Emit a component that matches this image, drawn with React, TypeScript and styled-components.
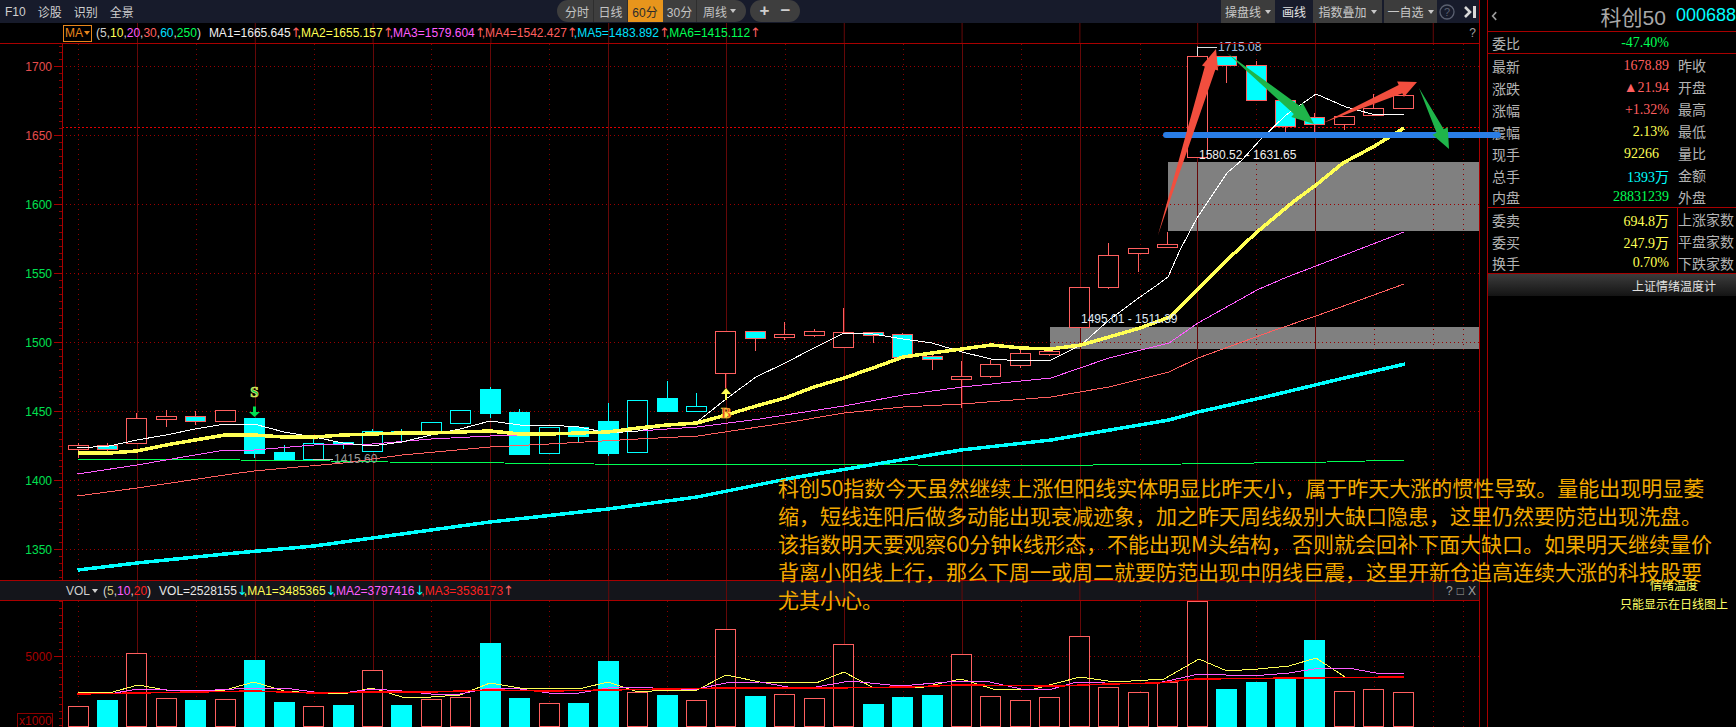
import React from 'react';
import styled, { createGlobalStyle } from 'styled-components';

const SANS = '"Liberation Sans", "Noto Sans CJK SC", sans-serif';
const SERIF = '"Liberation Serif", "Noto Sans CJK SC", serif';
const LINE = '#a80000';
const RED = '#ff5f5f';
const CYAN = '#00ffff';
const YELLOW = '#ffff54';
const MAGENTA = '#ff5cff';
const GREEN = '#00ff54';

const GlobalStyle = createGlobalStyle`
  html, body {
    margin: 0;
    background: #000;
    overflow: hidden;
  }
`;

const Page = styled.div`
  position: relative;
  width: 1736px;
  height: 727px;
  display: grid;
  grid-template-columns: 1480px 1fr;
  background: #000;
  overflow: hidden;
  font-family: ${SANS};
`;

const ChartColumn = styled.div`
  display: flex;
  flex-direction: column;
  height: 727px;
  border-right: 1px solid ${LINE};
  box-sizing: border-box;
`;

const Toolbar = styled.div`
  height: 23px;
  flex: none;
  display: flex;
  align-items: flex-start;
  background: #171b2b;
  color: #cfcfcf;
  font-size: 12px;
`;

const LeftMenu = styled.div`
  width: 557px;
  height: 23px;
  flex: none;
  display: flex;
  align-items: center;
  gap: 12px;
  padding-left: 5px;
  box-sizing: border-box;
`;

const Pill = styled.div`
  height: 22px;
  flex: none;
  display: flex;
  align-items: stretch;
  padding: 0 4px;
  margin-right: 4px;
  border-radius: 11px;
  background: #3e3e3e;
  overflow: hidden;
`;

const PillItem = styled.div<{ $w: number; $on?: boolean; $bare?: boolean }>`
  width: ${(p) => p.$w}px;
  display: flex;
  align-items: center;
  justify-content: center;
  gap: 3px;
  color: ${(p) => (p.$on ? '#2c2c2c' : '#c4c4c4')};
  background: ${(p) => (p.$on ? '#e8951c' : 'transparent')};
  border-right: ${(p) => (p.$bare ? '0' : `1px solid ${p.$on ? '#e8951c' : '#2e2e2e'}`)};
  box-sizing: border-box;
  &:last-child {
    border-right: 0;
  }
`;

const Caret = styled.span`
  display: inline-block;
  width: 0;
  height: 0;
  border-left: 3.5px solid transparent;
  border-right: 3.5px solid transparent;
  border-top: 4px solid currentColor;
`;

const ZoomSign = styled.span`
  font-size: 17px;
  font-weight: 700;
  color: #cfcfcf;
`;

const ToolRight = styled.div`
  margin-left: 417px;
  flex: none;
  display: flex;
  align-items: flex-start;
  height: 23px;
`;

const ToolButton = styled.div<{ $w: number; $ml?: number; $flat?: boolean }>`
  width: ${(p) => p.$w}px;
  margin-left: ${(p) => p.$ml ?? 0}px;
  height: 23px;
  display: flex;
  align-items: center;
  justify-content: center;
  gap: 4px;
  color: ${(p) => (p.$flat ? '#e4e4e4' : '#c8c8c8')};
  background: ${(p) => (p.$flat ? 'transparent' : '#3c3c3c')};
`;

const IconSlot = styled.div<{ $ml: number }>`
  margin-left: ${(p) => p.$ml}px;
  height: 23px;
  display: flex;
  align-items: center;
`;

const IndicatorBar = styled.div<{ $h: number; $bg: string }>`
  height: ${(p) => p.$h}px;
  display: flex;
  background: ${(p) => p.$bg};
  box-sizing: border-box;
  flex: none;
`;

const BarGutter = styled.div`
  width: 62px;
  flex: none;
`;

/* the chart's vertical rules run on through the legend strips */
const Legend = styled.div`
  flex: 1;
  display: flex;
  align-items: center;
  position: relative;
  padding-left: 1px;
  font-size: 12px;
  white-space: nowrap;
  color: #d8d8d8;
  background: linear-gradient(to right, #660808 1px, transparent 1px) 75px 0 / 117.8px 100% repeat-x;
`;

const MaBox = styled.div`
  width: 29px;
  height: 17px;
  display: flex;
  align-items: center;
  justify-content: center;
  gap: 1px;
  margin-right: 4px;
  border: 1px solid #e8861c;
  color: #e8861c;
  box-sizing: border-box;
`;

const VolTag = styled.div`
  display: flex;
  align-items: center;
  gap: 2px;
  width: 37px;
  margin-left: 3px;
  color: #cfcfcf;
`;

const Tone = styled.span<{ $c: string }>`
  color: ${(p) => p.$c};
`;

const Trend = styled.span<{ $c: string }>`
  display: inline-block;
  width: 7px;
  text-align: center;
  font-family: "DejaVu Sans", sans-serif;
  font-size: 13px;
  line-height: 12px;
  color: ${(p) => p.$c};
  overflow: visible;
`;

const Readout = styled.span`
  margin-left: 8px;
`;

const BarTools = styled.div`
  position: absolute;
  right: 3px;
  top: 0;
  bottom: 0;
  display: flex;
  align-items: center;
  gap: 4px;
  color: #a0a0a0;
  font-size: 12px;
`;

const RedRule = styled.div`
  height: 1px;
  background: ${LINE};
  flex: none;
  position: relative;
`;

const PlotSvg = styled.svg`
  display: block;
  flex: none;
  background: #000;
  overflow: visible;
`;

const AxisText = styled.text<{ $c: string }>`
  font-family: ${SANS};
  font-size: 12px;
  fill: ${(p) => p.$c};
`;

const NoteText = styled.text<{ $c: string }>`
  font-family: ${SANS};
  font-size: 12px;
  fill: ${(p) => p.$c};
`;

const SignalText = styled.text<{ $c: string; $s: string }>`
  font-family: ${SERIF};
  font-size: 15px;
  font-weight: 700;
  fill: ${(p) => p.$c};
  stroke: ${(p) => p.$s};
  stroke-width: 0.7px;
`;

const QuotePanel = styled.aside`
  margin-left: 7px;
  border-left: 1px solid ${LINE};
  display: flex;
  flex-direction: column;
  color: #b4b4b4;
  font-size: 14px;
  overflow: hidden;
`;

const TitleRow = styled.div`
  height: 31px;
  flex: none;
  display: flex;
  align-items: center;
  padding-left: 3px;
  border-bottom: 1px solid ${LINE};
  white-space: nowrap;
`;

const Name = styled.span`
  margin-left: 103px;
  font-size: 21px;
  color: #a8a8a8;
`;

const Code = styled.span`
  margin-left: 10px;
  font-size: 18px;
  color: ${CYAN};
`;

const Section = styled.div`
  display: flex;
  flex-direction: column;
  flex: none;
  border-bottom: 1px solid ${LINE};
`;

const QuoteRow = styled.div`
  height: 22px;
  display: grid;
  grid-template-columns: 28px 1fr 58px;
  column-gap: 9px;
  align-items: center;
  padding: 1px 0 0 4px;
  box-sizing: border-box;
  white-space: nowrap;
  &:last-child {
    height: 21px;
  }
`;

const Value = styled.span<{ $c: string; $inset?: number }>`
  text-align: right;
  font-family: ${SERIF};
  color: ${(p) => p.$c};
  padding-right: ${(p) => p.$inset ?? 0}px;
`;

const SideLabel = styled.span<{ $split?: boolean }>`
  align-self: stretch;
  display: flex;
  align-items: center;
  margin-top: -1px;
  ${(p) => (p.$split ? `border-left: 1px solid ${LINE}; margin-left: -1px;` : '')}
`;

const GaugeButton = styled.div`
  height: 22px;
  flex: none;
  display: flex;
  align-items: center;
  padding-left: 144px;
  font-size: 12px;
  color: #e0e0e0;
  background: linear-gradient(#3c3c3c, #141414);
`;

const GaugeNote = styled.div`
  width: 108px;
  margin: 280px 0 0 132px;
  display: flex;
  flex-direction: column;
  align-items: center;
  gap: 2px;
  font-size: 12px;
  color: #ffff66;
  white-space: nowrap;
`;

const OverlaySvg = styled.svg`
  position: absolute;
  left: 0;
  top: 0;
  pointer-events: none;
`;

const Commentary = styled.div`
  position: absolute;
  left: 778px;
  top: 473px;
  font-family: "Noto Sans CJK SC", ${SANS};
  font-size: 21px;
  line-height: 28px;
  color: #f2a900;
  white-space: nowrap;
`;

type Kind = 'r' | 'c' | 'h' | 'm';
type Candle = [number, number, number, number, Kind];

// bodyTop, bodyBottom, wickTop, wickBottom, kind
const candles: Candle[] = [
  [445, 449, 443, 458, 'r'], [445, 449, 443, 451, 'm'], [418, 443, 413, 443, 'r'], [416, 419, 410, 427, 'r'],
  [416, 421, 411, 425, 'm'], [410, 421, 410, 421, 'r'], [418, 453, 418, 458, 'c'], [452, 459, 445, 459, 'c'],
  [443, 459, 435, 459, 'h'], [442, 444, 442, 449, 'c'], [431, 451, 429, 451, 'h'], [431, 433, 429, 441, 'c'],
  [422, 432, 422, 432, 'h'], [410, 423, 410, 424, 'h'], [389, 413, 387, 418, 'c'], [412, 454, 409, 454, 'c'],
  [427, 453, 427, 453, 'h'], [427, 436, 426, 442, 'c'], [421, 453, 403, 456, 'c'], [400, 452, 400, 452, 'h'],
  [398, 411, 381, 411, 'c'], [406, 411, 393, 411, 'h'], [331, 373, 331, 388, 'r'], [331, 338, 331, 351, 'm'],
  [334, 337, 322, 340, 'r'], [331, 335, 329, 337, 'r'], [332, 347, 308, 347, 'r'], [332, 335, 332, 343, 'm'],
  [334, 357, 333, 359, 'm'], [356, 359, 351, 370, 'm'], [376, 379, 361, 408, 'r'], [364, 376, 360, 378, 'r'],
  [353, 365, 350, 368, 'r'], [351, 354, 349, 356, 'r'], [287, 327, 287, 327, 'r'], [255, 287, 243, 289, 'r'],
  [248, 253, 248, 272, 'r'], [244, 247, 232, 247, 'r'], [56, 157, 46, 157, 'r'], [56, 65, 56, 83, 'm'],
  [65, 100, 61, 100, 'm'], [100, 126, 100, 132, 'm'], [117, 124, 113, 138, 'm'], [116, 124, 116, 130, 'r'],
  [108, 115, 94, 115, 'r'], [95, 108, 91, 108, 'r'],
];

// top of each volume bar; hollow means an up bar
const volumes: [number, boolean][] = [
  [706, true], [700, false], [653, true], [698, true], [700, false], [699, true], [660, false], [702, false],
  [706, true], [705, false], [670, true], [705, false], [699, true], [697, true], [643, false], [698, false],
  [703, true], [703, false], [661, false], [692, true], [695, false], [700, true], [629, true], [696, false],
  [694, true], [698, true], [644, true], [704, false], [697, false], [695, false], [654, true], [696, true],
  [700, true], [697, true], [636, true], [687, true], [692, true], [682, true], [601, true], [689, false],
  [682, false], [678, false], [640, false], [691, true], [689, true], [692, true],
];

const pts = (raw: number[][]) => raw.map((p) => p.join(',')).join(' ');

const ma1 = [[77.5,448],[109,446],[137,440],[166,435],[195,429],[225,424],[254,424],[284,432],[314,437],[343,443],[372,446],[402,442],[431,435],[460,429],[490,421],[520,425],[549,425],[579,427],[608,433],[638,431],[667,425],[697,422],[726,399],[756,377],[785,363],[814,348],[844,333],[873,334],[903,339],[932,343],[962,352],[991,359],[1022,361],[1051,360],[1081,345],[1109,320],[1140,297],[1160,283],[1168,277],[1180,250],[1197,218],[1227,173],[1242,160],[1260,140],[1286,115],[1316,94],[1346,107],[1372,114],[1404,114]];
const ma2 = [[77.5,453],[109,453],[137,451],[166,445],[195,440],[225,435],[254,435],[284,437],[314,437],[343,435],[372,434],[402,433],[431,433],[460,432],[490,431],[520,434],[549,434],[579,433],[608,432],[638,428],[667,425],[697,423],[726,415],[756,406],[785,398],[814,387],[844,378],[873,368],[903,357],[932,353],[962,349],[991,345],[1022,348],[1051,349],[1081,345],[1109,337],[1140,328],[1170,317],[1197,290],[1227,260],[1257,232],[1293,202],[1316,185],[1343,163],[1373,147],[1404,128]];
const ma3 = [[77.5,474],[137,465],[195,455],[225,450],[254,450],[314,445],[343,444],[372,444],[431,439],[490,436],[520,435],[579,433],[638,431],[697,427],[760,419],[785,415],[844,406],[903,395],[962,387],[1051,378],[1109,358],[1169,343],[1198,323],[1257,290],[1287,277],[1316,266],[1404,232]];
const ma4 = [[77.5,496],[137,488],[225,475],[254,471],[343,463],[402,455],[490,447],[549,444],[638,439],[698,436],[785,423],[844,413],[903,407],[962,404],[1051,397],[1109,387],[1169,372],[1198,358],[1275,330],[1316,316],[1404,284]];
const ma5 = [[77.5,570],[137,563],[225,554],[314,546],[431,530],[490,522],[608,509],[697,497],[792,478],[961,450],[1051,440],[1169,420],[1198,412],[1265,397],[1340,379],[1405,364]];
const ma6 = [[77.5,459],[153,459],[240,460],[330,461],[388,462],[504,463],[594,464],[683,465],[830,464],[1006,466],[1182,464],[1327,462],[1405,460]];

const volMa1 = [[77.5,692],[109,693],[138,685],[166,690],[195,691],[225,690],[254,682],[284,691],[314,693],[343,694],[372,688],[402,697],[431,697],[460,695],[490,683],[520,688],[549,688],[579,689],[608,682],[638,692],[667,690],[697,690],[726,675],[760,682],[816,683],[844,672],[872,687],[919,688],[961,679],[993,689],[1034,689],[1080,677],[1115,682],[1164,679],[1199,659],[1227,671],[1258,669],[1289,666],[1316,658],[1345,677],[1382,677],[1404,678]];
const volMa2 = [[77.5,693],[109,694],[138,689],[195,691],[254,688],[284,688],[314,692],[343,693],[372,689],[402,691],[431,694],[460,694],[490,688],[520,689],[549,693],[579,693],[608,688],[638,687],[667,689],[697,689],[726,683],[760,682],[788,687],[816,687],[850,681],[900,686],[959,681],[990,682],[1021,689],[1052,689],[1077,682],[1133,684],[1158,683],[1199,674],[1252,676],[1289,673],[1320,668],[1348,668],[1376,673],[1404,673]];
const volMa3 = [[77.5,694],[137,693],[195,692],[254,691],[314,693],[372,692],[431,692],[490,690],[549,691],[608,690],[667,689],[726,688],[828,688],[909,687],[959,685],[1059,686],[1108,684],[1158,683],[1196,679],[1301,678],[1404,677]];

const solidRules = [137, 255, 373, 490, 608, 726, 844, 962, 1080, 1197, 1315];
const dottedRules = [78, 196, 314, 431, 549, 667, 785, 903, 1021, 1140, 1256, 1374, 1433, 1463];

const candleX = (i: number) => 77.5 + 29.45 * i;
const priceY = (p: number) => 66.7 + (1700 - p) * 1.38;

const Rules: React.FC<{ top: number; bottom: number }> = ({ top, bottom }) => (
  <g shapeRendering="crispEdges">
    {solidRules.map((x) => (
      <line key={x} x1={x} x2={x} y1={top} y2={bottom} stroke="#660808" />
    ))}
    {dottedRules.map((x) => (
      <line key={x} x1={x} x2={x} y1={top} y2={bottom} stroke="#8a0000" strokeDasharray="1 4" />
    ))}
  </g>
);

const Ticks: React.FC<{ top: number; bottom: number; from: number }> = ({ top, bottom, from }) => {
  const ys: number[] = [];
  for (let y = from; y < bottom; y += 6.9) if (y > top) ys.push(y);
  for (let y = from - 6.9; y > top; y -= 6.9) ys.push(y);
  return (
    <g shapeRendering="crispEdges">
      <line x1={62} x2={62} y1={top} y2={bottom} stroke={LINE} />
      {ys.map((y) => (
        <line key={y} x1={59} x2={62} y1={y} y2={y} stroke="#8a0000" />
      ))}
    </g>
  );
};

const PriceChart: React.FC = () => (
  <PlotSvg width={1479} height={536} viewBox="0 44 1479 536">
    <g shapeRendering="crispEdges">
      <rect x={1168} y={162} width={311} height={69} fill="#808080" />
      <rect x={1050} y={327} width={429} height={22} fill="#808080" />
      {[1700, 1650, 1600, 1550, 1500, 1450, 1400, 1350].map((p) => (
        <line key={p} x1={62} x2={1479} y1={priceY(p)} y2={priceY(p)} stroke="#9a0000" strokeDasharray="1 3" />
      ))}
      <line x1={62} x2={1479} y1={127} y2={127} stroke="#e00000" strokeDasharray="2 2" />
    </g>
    <Rules top={44} bottom={580} />
    <Ticks top={44} bottom={580} from={priceY(1700)} />
    {[1700, 1650, 1600, 1550, 1500, 1450, 1400, 1350].map((p) => (
      <g key={p}>
        <AxisText $c={p > 1640 ? '#e64c4c' : '#00e050'} x={52} y={priceY(p) + 4.5} textAnchor="end">
          {p}
        </AxisText>
        <line x1={54} x2={62} y1={priceY(p)} y2={priceY(p)} stroke={LINE} shapeRendering="crispEdges" />
      </g>
    ))}
    <g shapeRendering="crispEdges">
      {candles.map(([top, bot, wt, wb, kind], i) => {
        const x = Math.round(candleX(i));
        const edge = kind === 'c' || kind === 'h' ? CYAN : RED;
        const fill = kind === 'c' || kind === 'm' ? CYAN : '#000';
        return (
          <g key={i}>
            <line x1={x} x2={x} y1={wt} y2={wb} stroke={edge} />
            <rect x={x - 10} y={top} width={20} height={bot - top} fill={fill} stroke={edge} />
          </g>
        );
      })}
      <polyline points={pts(ma6)} fill="none" stroke={GREEN} strokeWidth={1} />
      <polyline points={pts(ma5)} fill="none" stroke={CYAN} strokeWidth={3.500} />
      <polyline points={pts(ma4)} fill="none" stroke={RED} strokeWidth={1} />
      <polyline points={pts(ma3)} fill="none" stroke={MAGENTA} strokeWidth={1} />
      <polyline points={pts(ma1)} fill="none" stroke="#fff" strokeWidth={1} />
      <polyline points={pts(ma2)} fill="none" stroke={YELLOW} strokeWidth={3.500} />
      <polyline points="1197,56 1197,47 1217,47" fill="none" stroke="#e0e0e0" />
      <line x1={313} x2={333} y1={459} y2={459} stroke="#cfcfcf" />
    </g>
    <NoteText $c="#a9c0e0" x={1218} y={51}>1715.08</NoteText>
    <NoteText $c="#f0f0f0" x={1199} y={159}>1580.52 - 1631.65</NoteText>
    <NoteText $c="#dfe8f4" x={1081} y={323}>1495.01 - 1511.39</NoteText>
    <NoteText $c="#9a9a9a" x={334} y={463}>1415.60</NoteText>
    <SignalText $c="#00d050" $s="#f0f060" x={254.5} y={397} textAnchor="middle">S</SignalText>
    <path d="M253 406.5h3v5.500h4l-5.500 5-5.500-5h4z" fill="#00e050" />
    <path d="M725 400v-6h-4l5-6 5 6h-4v6z" fill={YELLOW} />
    <SignalText $c="#e83020" $s="#ffe040" x={726} y={418} textAnchor="middle">B</SignalText>
  </PlotSvg>
);

const VolumeChart: React.FC = () => (
  <PlotSvg width={1479} height={126} viewBox="0 601 1479 126">
    <line x1={62} x2={1479} y1={656.500} y2={656.500} stroke="#8a0000" strokeDasharray="1 3" shapeRendering="crispEdges" />
    <Rules top={601} bottom={727} />
    <Ticks top={601} bottom={727} from={656.500} />
    <line x1={54} x2={62} y1={656.500} y2={656.500} stroke={LINE} shapeRendering="crispEdges" />
    <AxisText $c="#a80000" x={52} y={661} textAnchor="end">5000</AxisText>
    <rect x={17.500} y={713.500} width={35} height={14} fill="none" stroke="#8a0000" />
    <AxisText $c="#a80000" x={19} y={725}>x1000</AxisText>
    <g shapeRendering="crispEdges">
      {volumes.map(([top, up], i) => {
        const x = Math.round(candleX(i));
        return up ? (
          <rect key={i} x={x - 10} y={top} width={20} height={726 - top} fill="#000" stroke={RED} />
        ) : (
          <rect key={i} x={x - 10} y={top} width={21} height={727 - top} fill={CYAN} />
        );
      })}
      <polyline points={pts(volMa1)} fill="none" stroke={YELLOW} strokeWidth={1} />
      <polyline points={pts(volMa2)} fill="none" stroke={MAGENTA} strokeWidth={1} />
      <polyline points={pts(volMa3)} fill="none" stroke="#ff0000" strokeWidth={1.500} />
    </g>
  </PlotSvg>
);

const maLegend: [string, string][] = [
  ['MA1=1665.645', '#f0f0f0'],
  ['MA2=1655.157', YELLOW],
  ['MA3=1579.604', MAGENTA],
  ['MA4=1542.427', RED],
  ['MA5=1483.892', '#00e0ff'],
  ['MA6=1415.112', GREEN],
];

const volLegend: [string, string, string][] = [
  ['VOL=2528155', '#e8e8e8', '↓'],
  ['MA1=3485365', YELLOW, '↓'],
  ['MA2=3797416', MAGENTA, '↓'],
  ['MA3=3536173', '#ff2020', '↑'],
];

const quoteRows = [
  ['最新', '1678.89', RED, '昨收'],
  ['涨跌', '▲21.94', RED, '开盘'],
  ['涨幅', '+1.32%', RED, '最高'],
  ['震幅', '2.13%', YELLOW, '最低'],
  ['现手', '92266', YELLOW, '量比'],
  ['总手', '1393万', CYAN, '金额'],
  ['内盘', '28831239', GREEN, '外盘'],
];

const orderRows = [
  ['委卖', '694.8万', YELLOW, '上涨家数'],
  ['委买', '247.9万', YELLOW, '平盘家数'],
  ['换手', '0.70%', YELLOW, '下跌家数'],
];

const arrowPoints = (x1: number, y1: number, x2: number, y2: number, neck: number, head: number, len: number) => {
  const d = Math.hypot(x2 - x1, y2 - y1);
  const ux = (x2 - x1) / d;
  const uy = (y2 - y1) / d;
  const bx = x2 - ux * len;
  const by = y2 - uy * len;
  const at = (w: number) => [bx - uy * w, by + ux * w];
  return pts([[x1, y1], at(neck / 2), at(head / 2), [x2, y2], at(-head / 2), at(-neck / 2)]);
};

const App: React.FC = () => (
  <Page>
    <GlobalStyle />
    <ChartColumn>
      <Toolbar>
        <LeftMenu>
          <span>F10</span>
          <span>诊股</span>
          <span>识别</span>
          <span>全景</span>
        </LeftMenu>
        <Pill>
          <PillItem $w={33}>分时</PillItem>
          <PillItem $w={34}>日线</PillItem>
          <PillItem $w={35} $on>60分</PillItem>
          <PillItem $w={34}>30分</PillItem>
          <PillItem $w={45}>周线<Caret /></PillItem>
        </Pill>
        <Pill>
          <PillItem $w={21} $bare><ZoomSign>+</ZoomSign></PillItem>
          <PillItem $w={21} $bare><ZoomSign>−</ZoomSign></PillItem>
        </Pill>
        <ToolRight>
          <ToolButton $w={54}>操盘线<Caret /></ToolButton>
          <ToolButton $w={38} $flat>画线</ToolButton>
          <ToolButton $w={69}>指数叠加<Caret /></ToolButton>
          <ToolButton $w={53} $ml={2}>一自选<Caret /></ToolButton>
          <IconSlot $ml={2}>
            <svg width={16} height={16} viewBox="0 0 16 16">
              <circle cx={8} cy={8} r={7} fill="none" stroke="#5a6070" strokeWidth={1.300} />
              <text x={8} y={12} textAnchor="middle" fontSize={11} fontFamily={SANS} fill="#5a6070">?</text>
            </svg>
          </IconSlot>
          <IconSlot $ml={9}>
            <svg width={14} height={14} viewBox="0 0 14 14">
              <path d="M1 2l5 5-5 5" fill="none" stroke="#d8d8d8" strokeWidth={2.600} />
              <rect x={9} y={1} width={3} height={12} fill="#d8d8d8" />
            </svg>
          </IconSlot>
        </ToolRight>
      </Toolbar>
      <IndicatorBar $h={20} $bg="#000">
        <BarGutter />
        <Legend>
          <MaBox>MA<Caret /></MaBox>
          <span>
            (<Tone $c="#d0d0d0">5</Tone>,<Tone $c={YELLOW}>10</Tone>,<Tone $c={MAGENTA}>20</Tone>,
            <Tone $c={RED}>30</Tone>,<Tone $c="#00e0ff">60</Tone>,<Tone $c={GREEN}>250</Tone>)
          </span>
          <Readout>
            {maLegend.map(([text, color], i) => (
              <React.Fragment key={text}>
                <Tone $c={color}>{i > 0 ? ',' : ''}{text}</Tone>
                <Trend $c={RED}>↑</Trend>
              </React.Fragment>
            ))}
          </Readout>
          <BarTools>?</BarTools>
        </Legend>
      </IndicatorBar>
      <RedRule />
      <PriceChart />
      <RedRule />
      <IndicatorBar $h={19} $bg="#14151b">
        <BarGutter />
        <Legend>
          <VolTag>VOL<Caret /></VolTag>
          <span>
            (<Tone $c="#d8c878">5</Tone>,<Tone $c={MAGENTA}>10</Tone>,<Tone $c="#ff2020">20</Tone>)
          </span>
          <Readout>
            {volLegend.map(([text, color, dir], i) => (
              <React.Fragment key={text}>
                <Tone $c={color}>{i > 0 ? ',' : ''}{text}</Tone>
                <Trend $c={dir === '↓' ? CYAN : RED}>{dir}</Trend>
              </React.Fragment>
            ))}
          </Readout>
          <BarTools>
            <span>?</span>
            <span>□</span>
            <span>X</span>
          </BarTools>
        </Legend>
      </IndicatorBar>
      <RedRule />
      <VolumeChart />
    </ChartColumn>

    <QuotePanel>
      <TitleRow>
        <svg width={12} height={18} viewBox="0 0 12 18">
          <path d="M9.500 2L3 9l6.500 7" fill="none" stroke="#9a9a9a" strokeWidth={3} />
        </svg>
        <Name>科创50</Name>
        <Code>000688</Code>
      </TitleRow>
      <Section>
        <QuoteRow>
          <span>委比</span>
          <Value $c={GREEN}>-47.40%</Value>
        </QuoteRow>
      </Section>
      <Section>
        {quoteRows.map(([label, value, color, side]) => (
          <QuoteRow key={label}>
            <span>{label}</span>
            <Value $c={color} $inset={label === '现手' ? 10 : 0}>{value}</Value>
            <SideLabel>{side}</SideLabel>
          </QuoteRow>
        ))}
      </Section>
      <Section>
        {orderRows.map(([label, value, color, side]) => (
          <QuoteRow key={label}>
            <span>{label}</span>
            <Value $c={color}>{value}</Value>
            <SideLabel $split>{side}</SideLabel>
          </QuoteRow>
        ))}
      </Section>
      <GaugeButton>上证情绪温度计</GaugeButton>
      <GaugeNote>
        <span>情绪温度</span>
        <span>只能显示在日线图上</span>
      </GaugeNote>
    </QuotePanel>

    <OverlaySvg width={1736} height={727} viewBox="0 0 1736 727">
      <line x1={1166} x2={1498} y1={135} y2={135} stroke="#2a7de6" strokeWidth={6} strokeLinecap="round" />
      <polygon points={arrowPoints(1158, 235, 1216, 49, 11, 17, 20)} fill="#f24e3e" />
      <polygon points={arrowPoints(1227, 53, 1314, 124, 10, 18, 22)} fill="#1fb54a" />
      <polygon points={arrowPoints(1323, 123, 1417, 82, 9, 17, 18)} fill="#f24e3e" />
      <polygon points={arrowPoints(1419, 88, 1449, 149, 8, 17, 20)} fill="#1fb54a" />
    </OverlaySvg>

    <Commentary>
      科创50指数今天虽然继续上涨但阳线实体明显比昨天小，属于昨天大涨的惯性导致。量能出现明显萎<br />
      缩，短线连阳后做多动能出现衰减迹象，加之昨天周线级别大缺口隐患，这里仍然要防范出现洗盘。<br />
      该指数明天要观察60分钟k线形态，不能出现M头结构，否则就会回补下面大缺口。如果明天继续量价<br />
      背离小阳线上行，那么下周一或周二就要防范出现中阴线巨震，这里开新仓追高连续大涨的科技股要<br />
      尤其小心。
    </Commentary>
  </Page>
);

export default App;
